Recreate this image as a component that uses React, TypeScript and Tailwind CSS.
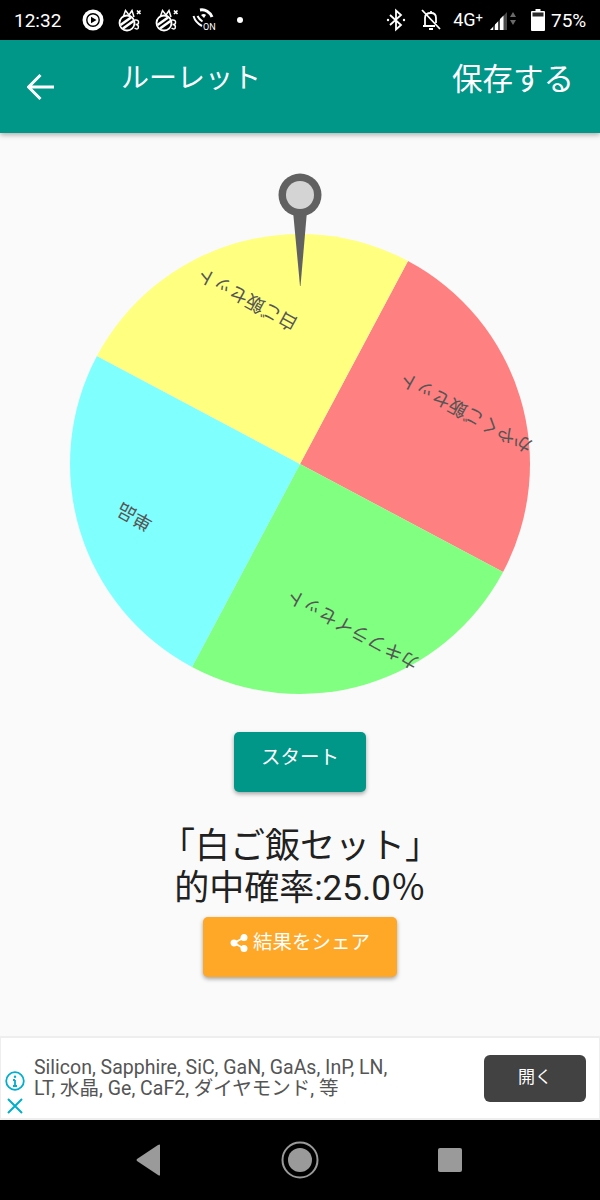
const CX = 300;
const CY = 331;
const R = 230;

type Slice = { from: number; to: number; fill: string };

const slices: Slice[] = [
  { from: 28, to: 118, fill: "#ff8080" },
  { from: 118, to: 208, fill: "#80ff80" },
  { from: 208, to: 298, fill: "#80ffff" },
  { from: 298, to: 388, fill: "#ffff80" },
];

// 上を0度として時計回り
function point(deg: number, r: number) {
  const a = (deg * Math.PI) / 180;
  return `${CX + r * Math.sin(a)} ${CY - r * Math.cos(a)}`;
}

function slicePath(s: Slice) {
  return `M${CX} ${CY} L${point(s.from, R)} A${R} ${R} 0 0 1 ${point(s.to, R)} Z`;
}

const labels = [
  { text: "白ご飯セット", x: 299, y: 187 },
  { text: "かやくご飯セット", x: 534, y: 309 },
  { text: "カキフライセット", x: 421, y: 526 },
  { text: "単品", x: 154, y: 387 },
];

function Wheel() {
  return (
    <svg width="600" height="587" viewBox="0 0 600 587" className="block">
      {slices.map((s) => (
        <path key={s.fill} d={slicePath(s)} fill={s.fill} />
      ))}
      {labels.map((l) => (
        <text
          key={l.text}
          x={l.x}
          y={l.y}
          fontSize="18.5"
          fill="#555555"
          transform={`rotate(208.5 ${l.x} ${l.y})`}
          style={{ fontFamily: "'Noto Sans CJK JP', sans-serif" }}
        >
          {l.text}
        </text>
      ))}
      <path d="M293 78 L307 78 L300.5 153 L300 153 Z" fill="#616161" />
      <circle cx="300" cy="62" r="21.5" fill="#616161" />
      <circle cx="300" cy="62" r="14" fill="#d4d4d4" />
    </svg>
  );
}

function BeeIcon() {
  return (
    <svg width="24" height="24" viewBox="0 0 24 24" fill="none" stroke="white" strokeWidth="1.5">
      <circle cx="9" cy="15" r="7.5" strokeWidth="1.8" />
      <path d="M2.5 17 L13 9.5" strokeWidth="2.6" />
      <path d="M5 20.5 L15.5 13" strokeWidth="2.6" />
      <path d="M5.5 8 L7.5 2.5 L11 7 M11 7 L14 2.5 L16 9" />
      <path d="M19 2.5 L22.5 6 M22.5 2.5 L19 6" strokeWidth="1.7" />
      <path d="M17 12 Q21 11.5 20.5 15 Q20 17 17.5 16.5 Q21.5 17 20 20.5 Q18.5 21.5 16.5 20" />
    </svg>
  );
}

function StatusBar() {
  return (
    <div className="flex h-10 items-center justify-between bg-black pl-[14px] pr-[13px] text-white">
      <div className="flex items-center">
        <span className="w-[49px] text-[19px] leading-none">12:32</span>
        <svg width="22" height="22" viewBox="0 0 22 22" className="ml-[19px]">
          <circle cx="11" cy="11" r="10.5" fill="white" />
          <circle cx="11" cy="11" r="6.2" fill="none" stroke="black" strokeWidth="1.4" />
          <path d="M9 7.8 L14.5 11 L9 14.2 Z" fill="black" />
        </svg>
        <span className="ml-[14px] flex">
          <BeeIcon />
        </span>
        <span className="ml-[13px] flex">
          <BeeIcon />
        </span>
        <svg width="24" height="24" viewBox="0 0 24 24" fill="none" stroke="white" className="ml-[13px]">
          <path d="M1.5 8 C3 13 6 16 10 18" strokeWidth="2" />
          <path d="M5.5 8 C6.5 10 8 12 10.5 13.5" strokeWidth="2" />
          <path d="M9 7 L12 10 L14 7 C13 6 11 5.5 9 7 Z" fill="white" stroke="none" />
          <path d="M8 2 C13 1 18 4 20 9" strokeWidth="3" />
          <text x="11" y="22" fontSize="9" fill="white" stroke="none" style={{ fontFamily: "Roboto, sans-serif" }}>
            ON
          </text>
        </svg>
        <span className="ml-[21px] h-[6px] w-[6px] rounded-full bg-white" />
      </div>
      <div className="flex items-center">
        <svg width="20" height="24" viewBox="0 0 20 24" fill="none" stroke="white" strokeWidth="1.8">
          <path d="M4 7 L15 17 L10 21.5 L10 2.5 L15 7 L4 17" />
          <circle cx="2" cy="12" r="1.2" fill="white" stroke="none" />
          <circle cx="18" cy="12" r="1.2" fill="white" stroke="none" />
        </svg>
        <svg width="22" height="24" viewBox="0 0 22 24" fill="none" stroke="white" strokeWidth="1.8" className="ml-[14px]">
          <path d="M5 18 L5 10 C5 7 7 5 11 5 C15 5 16 7 16 10 L16 15" />
          <path d="M3 18 L15 18 M9 21 L13 21 M11 3 L11 5" />
          <path d="M2 2 L20 21" />
        </svg>
        <span className="ml-[11px] text-[18px] leading-none">4G</span>
        <span className="mb-[6px] text-[13px] leading-none">+</span>
        <svg width="30" height="24" viewBox="0 0 30 24" className="ml-[6px]">
          <path d="M1 22 L18 4 L18 22 Z" fill="#4a4a4a" />
          <path d="M1 22 L4 19 L4 22 Z M6 22 L6 16.5 L9 13.5 L9 22 Z M11 22 L11 11 L14.5 7.5 L14.5 22 Z" fill="white" />
          <path d="M21 9 L24 4 L27 9 Z M21 12 L27 12 L24 17 Z" fill="#6a6a6a" />
        </svg>
        <svg width="14" height="22" viewBox="0 0 14 22" className="ml-[12px]">
          <path d="M4.5 0 H9.5 V2 H13 Q14 2 14 3 V21 Q14 22 13 22 H1 Q0 22 0 21 V3 Q0 2 1 2 H4.5 Z" fill="white" />
          <rect x="1.5" y="3.5" width="11" height="4" fill="#2a2a2a" />
        </svg>
        <span className="ml-[6px] w-[36px] text-[19px] leading-none">75%</span>
      </div>
    </div>
  );
}

function Header() {
  return (
    <div className="relative z-10 flex h-[93px] justify-between bg-[#009688] pl-[27px] pr-[26px] text-white shadow-[0_2px_5px_rgba(0,0,0,0.3)]">
      <div className="flex">
        <svg width="28" height="28" viewBox="0 0 28 28" fill="none" stroke="white" strokeWidth="3" className="mt-[33px]">
          <path d="M1.5 14 H27 M13.5 2 L1.5 14 L13.5 26" />
        </svg>
        <span className="ml-[66px] mt-[20px] text-[28px] leading-[38px]">ルーレット</span>
      </div>
      <span className="mt-[19px] text-[30.5px] leading-[42px]">保存する</span>
    </div>
  );
}

function AdBar() {
  return (
    <div className="flex h-[84px] items-center border-x border-y-2 border-[#eeeeee] bg-white">
      <div className="mt-[30px] flex w-[33px] shrink-0 flex-col items-center pr-[6px]">
        <svg width="20" height="20" viewBox="0 0 20 20" fill="none" stroke="#00aecd" strokeWidth="1.8">
          <circle cx="10" cy="10" r="8.8" />
          <path d="M10 9 V15 M8 9 H10 M8 15 H12" />
          <circle cx="10" cy="5.8" r="1.2" fill="#00aecd" stroke="none" />
        </svg>
        <svg width="18" height="18" viewBox="0 0 18 18" fill="none" stroke="#00aecd" strokeWidth="2" className="mt-[6px]">
          <path d="M2 2 L16 16 M16 2 L2 16" />
        </svg>
      </div>
      <div className="w-[400px] text-[19.5px] leading-[21px] text-[#555555]">
        <div>Silicon, Sapphire, SiC, GaN, GaAs, InP, LN,</div>
        <div>LT, 水晶, Ge, CaF2, ダイヤモンド, 等</div>
      </div>
      <div className="ml-auto mr-[13px] flex h-[47px] w-[102px] items-center justify-center rounded-md bg-[#424242] text-[17px] text-white">
        開く
      </div>
    </div>
  );
}

function NavBar() {
  return (
    <div className="flex h-[80px] items-center bg-black">
      <svg width="600" height="80" viewBox="0 0 600 80" className="block">
        <path d="M160 25 V55 Q160 56 158 55 L137 41 Q136 40 137 39 L158 25 Q160 24 160 25 Z" fill="#9a9a9a" />
        <circle cx="300" cy="40" r="17.5" fill="none" stroke="#9a9a9a" strokeWidth="2" />
        <circle cx="300" cy="40" r="12" fill="#9a9a9a" />
        <rect x="438" y="28" width="24" height="24" rx="2" fill="#9a9a9a" />
      </svg>
    </div>
  );
}

export default function App() {
  return (
    <div
      className="flex h-[1200px] w-[600px] flex-col overflow-hidden bg-[#fafafa]"
      style={{ fontFamily: "Roboto, 'Noto Sans CJK JP', sans-serif" }}
    >
      <StatusBar />
      <Header />
      <main className="flex flex-1 flex-col items-center">
        <Wheel />
        <button
          type="button"
          className="mt-[12px] h-[60px] w-[132px] rounded-[5px] bg-[#009688] pb-[8px] text-[19.5px] text-white shadow-[0_2px_4px_rgba(0,0,0,0.35)]"
        >
          スタート
        </button>
        <div className="mt-[34px] text-center text-[35px] leading-[42px] text-[#212121]">
          <div>「白ご飯セット」</div>
          <div>的中確率:25.0％</div>
        </div>
        <button
          type="button"
          className="mt-[7px] flex h-[60px] w-[194px] items-center justify-center gap-[5px] rounded-[5px] bg-[#ffa726] pb-[8px] text-[19.5px] text-white shadow-[0_2px_4px_rgba(0,0,0,0.35)]"
        >
          <svg width="18" height="18" viewBox="0 0 18 18" fill="white" stroke="white" strokeWidth="1.8">
            <path d="M14 3.5 L4 9 L14 14.5" fill="none" />
            <circle cx="14" cy="3.5" r="2.6" />
            <circle cx="4" cy="9" r="2.6" />
            <circle cx="14" cy="14.5" r="2.6" />
          </svg>
          結果をシェア
        </button>
      </main>
      <AdBar />
      <NavBar />
    </div>
  );
}
